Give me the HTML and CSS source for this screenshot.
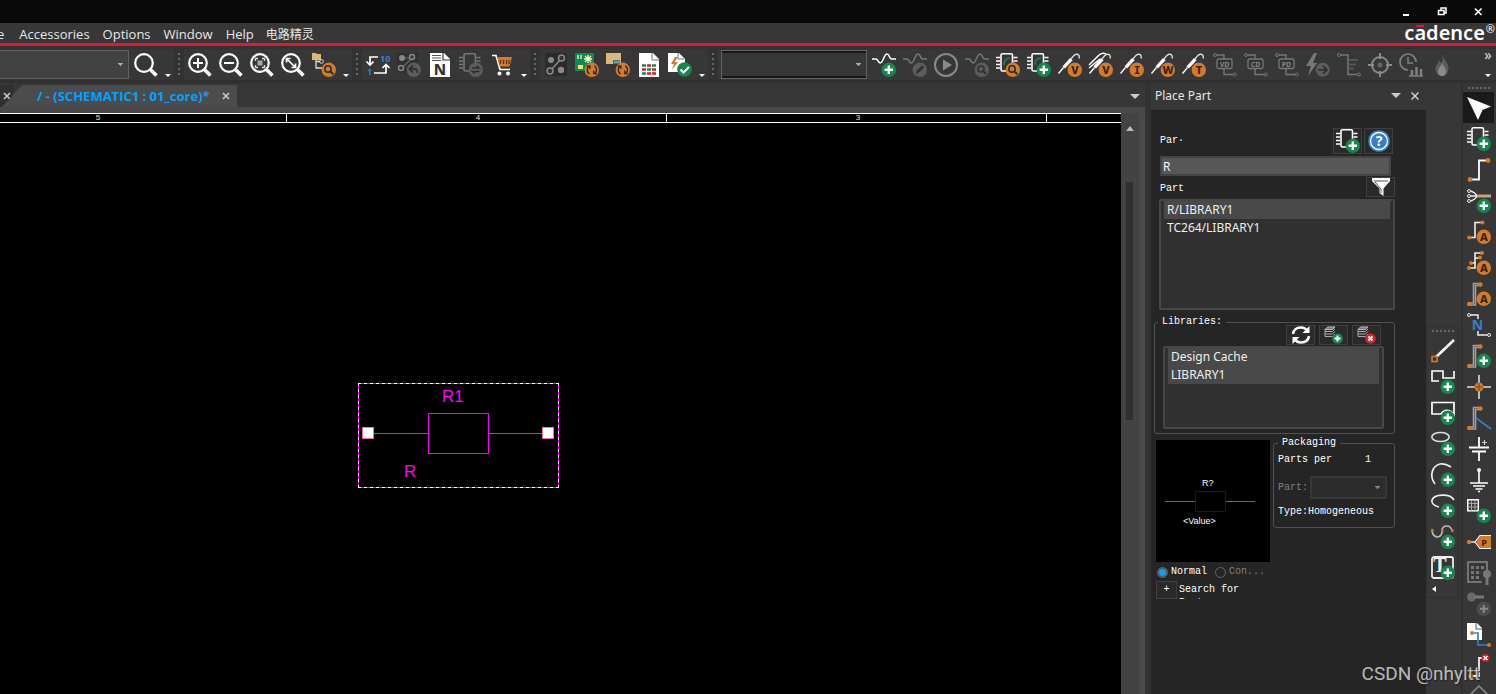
FILE: index.html
```html
<!DOCTYPE html>
<html lang="en">
<head>
<meta charset="utf-8">
<title>Schematic editor</title>
<link rel="stylesheet" href="styles.css">
</head>
<body>
<svg class="sprite" aria-hidden="true">
  <symbol id="b-plus" viewBox="0 0 24 24"><circle cx="16.8" cy="16.8" r="7.2" fill="#14884f"/><path d="M16.8 12.6v8.4M12.6 16.8h8.4" stroke="#fff" stroke-width="2.4"/></symbol>
  <symbol id="b-orange" viewBox="0 0 24 24"><circle cx="16.8" cy="16.8" r="7.2" fill="#d67a27"/></symbol>
  <symbol id="b-gray" viewBox="0 0 24 24"><circle cx="16.8" cy="16.8" r="7.2" fill="#5c5c5c"/></symbol>
  <symbol id="b-find" viewBox="0 0 24 24"><circle cx="16.8" cy="16.8" r="7.2" fill="#d67a27"/><circle cx="16" cy="16" r="3.2" fill="none" stroke="#2b2b2b" stroke-width="1.5"/><path d="M18.4 18.4l3 3" stroke="#2b2b2b" stroke-width="2"/></symbol>
  <symbol id="b-sync" viewBox="0 0 24 24"><circle cx="16.8" cy="16.8" r="7.2" fill="#d67a27"/><path d="M14.500 20.800a4.600 4.600 0 0 1-.5-7.600M19.300 12.900a4.600 4.600 0 0 1 .5 7.600M11.800 13h3v3M21.800 20.600h-3v-3" fill="none" stroke="#2b2b2b" stroke-width="1.4"/></symbol>
  <symbol id="lens" viewBox="0 0 24 24"><circle cx="10" cy="10" r="8.8" fill="none" stroke="#fff" stroke-width="2.2"/><path d="M16.4 16.4l6 6" stroke="#fff" stroke-width="3.6"/></symbol>
  <symbol id="chip" viewBox="0 0 24 24"><path d="M14 18H6.500q-1.500 0-1.500-1.500V2Q5 .8 6.500 .8H15q1.500 0 1.500 1.500V10" fill="none" stroke="currentColor" stroke-width="1.6"/><path d="M0 4.500h4M0 8h4M0 11.500h4M0 15h4M17.500 4.500h4M17.500 8h4" stroke="currentColor" stroke-width="1.6"/></symbol>
  <symbol id="wave" viewBox="0 0 24 24"><path d="M0 6h4c2 0 2 4 4.500 4S12 1 15 1s2 5 4.500 5H24" fill="none" stroke="currentColor" stroke-width="1.5"/></symbol>
  <symbol id="probe" viewBox="0 0 24 24"><path d="M.5 20.500l5-6" stroke="#fff" stroke-width="1.300"/><path d="M4.500 13.500L12 5l2.600 2.200-7.600 8.300z" fill="#fff"/><path d="M13 6c2-3 3.500-5 6-4.800 2 .2 2.500 2 2.200 4.300" fill="none" stroke="#ddd" stroke-width="1.400"/><circle cx="16.800" cy="16.800" r="7.200" fill="#d67a27"/></symbol>
  <symbol id="tag" viewBox="0 0 24 24"><circle cx="2" cy="2" r="1.500" fill="none" stroke="#777" /><path d="M3.500 2H11v4M11 16v5.500h9" fill="none" stroke="#777" stroke-width="1.400"/><rect x="4" y="6" width="15" height="9.500" rx="1.500" fill="#333" stroke="#777" stroke-width="1.300"/><circle cx="21.800" cy="21.500" r="1.500" fill="none" stroke="#777"/></symbol>
  <symbol id="net" viewBox="0 0 24 24"><path d="M2 17.500h6V2.500h8" fill="none" stroke="#eee" stroke-width="1.600"/><circle cx="2.200" cy="17.500" r="2" fill="#d67a27"/><circle cx="15.500" cy="2.500" r="2" fill="#d67a27"/></symbol>
  <symbol id="bus" viewBox="0 0 24 24"><path d="M2 22h5.500V2.500H14" fill="none" stroke="#a0a0a0" stroke-width="3.600"/><path d="M2 22h5.500V2.500H14" fill="none" stroke="#6c6c6c" stroke-width="1"/><circle cx="2.200" cy="22" r="2.200" fill="#d67a27"/><circle cx="13.500" cy="2.500" r="2.200" fill="#d67a27"/></symbol>
  <symbol id="stack" viewBox="0 0 12 12"><path d="M3.500 1h7.500l-2.500 2.500H1z" fill="#777" stroke="#bbb"/><path d="M1 3.500v2h7.500L11 3M1 5.500v2.500h7.500L11 5.500M1 8v2.500h7.500L11 8" fill="none" stroke="#aaa"/></symbol>
</svg>

<header class="titlebar">
  <button class="win" aria-label="Minimize"><svg viewBox="0 0 12 12"><path d="M3 9h6" stroke="#fff" stroke-width="2"/></svg></button>
  <button class="win" aria-label="Restore"><svg viewBox="0 0 12 12"><path d="M5 4V2h5v5H8M2.500 4.500H8v4H2.500z" fill="none" stroke="#fff" stroke-width="1.500"/></svg></button>
  <button class="win" aria-label="Close"><svg viewBox="0 0 12 12"><path d="M3 2.500l6.500 6.500M9.500 2.500L3 9" stroke="#fff" stroke-width="1.600"/></svg></button>
</header>

<nav class="menubar">
  <button>e</button><button>Accessories</button><button>Options</button><button>Window</button><button>Help</button><button class="cjk">电路精灵</button>
  <div class="brand">c<span class="macron">a</span>dence<span class="reg">®</span></div>
</nav>

<div class="toolbar">
  <select class="combo wide-combo" aria-label="Find"><option></option></select>
  <button class="tool" aria-label="Search"><svg><use href="#lens"/></svg></button>
  <button class="more" aria-label="More search tools"></button>
  <i class="grip"></i>
  <button class="tool" aria-label="Zoom in"><svg><use href="#lens"/><path d="M10 5v10M5 10h10" stroke="#fff" stroke-width="2"/></svg></button>
  <button class="tool" aria-label="Zoom out"><svg><use href="#lens"/><path d="M5 10h10" stroke="#fff" stroke-width="2"/></svg></button>
  <button class="tool" aria-label="Zoom to fit"><svg><use href="#lens"/><path d="M5.500 8V5.500H8M12 5.500h2.500V8M14.500 12v2.500H12M8 14.500H5.500V12" fill="none" stroke="#ddd" stroke-width="1.300"/><rect x="7.500" y="7.500" width="5" height="5" fill="#aaa"/></svg></button>
  <button class="tool" aria-label="Zoom to selection"><svg><use href="#lens"/><path d="M6 6l8 8M5.500 9.500v-4h4M14.500 10.500v4h-4" fill="none" stroke="#fff" stroke-width="1.700"/></svg></button>
  <button class="tool" aria-label="Find in hierarchy"><svg><path d="M0 0h4l1 1h4v6H0z" fill="#deb57a"/><path d="M4 7v8h6M4 8.500h4" fill="none" stroke="#ddd" stroke-width="1.300"/><circle cx="9.500" cy="8.500" r="1.800" fill="none" stroke="#ddd"/><use href="#b-find"/></svg></button>
  <button class="more" aria-label="More zoom tools"></button>
  <i class="grip"></i>
  <button class="tool" aria-label="Annotate"><svg><path d="M12 4H4v8M.5 8.500L4 12l3.500-3.500M8 20h12v-8M16.500 15l3.500-3.500L23.500 15" fill="none" stroke="#fff" stroke-width="1.700"/><text x="14" y="9" class="t-num">10</text><text x="1" y="22" class="t-num">1</text></svg></button>
  <button class="tool" aria-label="Back annotate"><svg><rect x="0" y="0" width="21" height="20" rx="2" fill="#303030"/><path d="M5 5h10M5 15L15 5" stroke="#666" stroke-width="1.200"/><circle cx="5" cy="5" r="3" fill="#888"/><circle cx="15" cy="4" r="2.500" fill="#333" stroke="#888" stroke-width="1.500"/><circle cx="4" cy="15" r="2.500" fill="#333" stroke="#888" stroke-width="1.500"/><use href="#b-gray"/><path d="M16 12.500L12.500 16l3.500 3.500M12.500 16h5q3 0 3 4" fill="none" stroke="#333" stroke-width="1.800"/></svg></button>
  <button class="tool" aria-label="Netlist"><svg><path d="M2 0h14l6 6v18H2z" fill="#fff"/><path d="M15 0v7h7" fill="#fff" stroke="#333" stroke-width="1.200"/><path d="M4 2.500h9M4 5h9M4 7.500h9" stroke="#555" stroke-width="1"/><text x="12" y="22" class="t-doc">N</text></svg></button>
  <button class="tool dim" aria-label="Replace part"><svg><use href="#chip"/><use href="#b-gray"/><path d="M13 15h7l-2.500-2M20.500 18.500h-7l2.500 2" fill="none" stroke="#2d2d2d" stroke-width="1.500"/></svg></button>
  <button class="tool" aria-label="Bill of materials"><svg><path d="M2 2.500h4l4 14h10" fill="none" stroke="#fff" stroke-width="1.700"/><path d="M7 4h15l-2.500 9.500H9.500z" fill="#d67a27"/><path d="M10.500 7v4M13.500 7v4M16.500 7v4M19 7v4" stroke="#52351b" stroke-width="1.300"/><circle cx="9.500" cy="20.500" r="2" fill="#fff"/><circle cx="18" cy="20.500" r="2" fill="#fff"/></svg></button>
  <button class="more" aria-label="More report tools"></button>
  <i class="grip"></i>
  <button class="tool" aria-label="Board links"><svg><rect x="1" y="0" width="22" height="23" rx="2" fill="#2b2b2b"/><path d="M6 18L18 5" stroke="#888" stroke-width="1.500"/><circle cx="7" cy="7" r="3" fill="#888"/><circle cx="17" cy="17" r="3.200" fill="#888"/><circle cx="17.500" cy="5" r="3" fill="#333" stroke="#888" stroke-width="1.600"/><circle cx="6" cy="18" r="3" fill="#333" stroke="#888" stroke-width="1.600"/></svg></button>
  <button class="tool" aria-label="Update board"><svg><path d="M0 0h19v18H0z" fill="#0d8b57"/><path d="M3 2v4M6 2v4M9 6h8M13 2v8M10 3l6 6M16 3l-6 6" stroke="#fff6ba" stroke-width="1.300"/><path d="M3 12h5v4H3z" fill="#f8e06b"/><use href="#b-sync"/></svg></button>
  <button class="tool" aria-label="Update layout"><svg><path d="M0 0h15v11H0z" fill="#deb57a"/><path d="M7 7h7v4H7z" fill="#237d9c"/><path d="M8 9h6" stroke="#8cc" /><use href="#b-sync"/></svg></button>
  <button class="tool" aria-label="Reports"><svg><path d="M2 0h14l6 6v18H2z" fill="#fff"/><path d="M15 0v7h7" fill="none" stroke="#777"/><path d="M5 12.500h4M15 12.500h4M10 16.500h4M5 20.500h4" stroke="#14884f" stroke-width="2.500"/><path d="M10 12.500h4M5 16.500h4M15 16.500h4M10 20.500h4M15 20.500h4" stroke="#cc2027" stroke-width="2.500"/></svg></button>
  <button class="tool" aria-label="Design rules check"><svg><path d="M0 0h11l6 6v13H0z" fill="#fff"/><path d="M10 0v6h6" fill="none" stroke="#777"/><path d="M7 4L3 11h3l-2 6 6-8H6.500L10 4z" fill="#d67a27"/><circle cx="16.500" cy="16.500" r="7.300" fill="#14884f"/><path d="M12.500 16.500l3 3 5.500-5.500" fill="none" stroke="#fff" stroke-width="2"/></svg></button>
  <button class="more" aria-label="More checks"></button>
  <i class="grip"></i>
  <select class="combo profile-combo" aria-label="Simulation profile"><option></option></select>
  <button class="tool" aria-label="New simulation"><svg><use href="#wave"/><use href="#b-plus"/></svg></button>
  <button class="tool dim" aria-label="Edit simulation"><svg><use href="#wave"/><use href="#b-gray"/><path d="M13 20.500l1-3 5-5 2 2-5 5z" fill="#2f2f2f"/></svg></button>
  <button class="tool dim" aria-label="Run"><svg><circle cx="12" cy="12" r="11" fill="none" stroke="#8a8a8a" stroke-width="2"/><path d="M9 6.500l9 5.500-9 5.500z" fill="#8a8a8a"/></svg></button>
  <button class="tool dim" aria-label="View results"><svg><use href="#wave"/><use href="#b-gray"/><circle cx="16" cy="16" r="3" fill="none" stroke="#2f2f2f" stroke-width="1.500"/><path d="M18 18l3 3" stroke="#2f2f2f" stroke-width="2"/></svg></button>
  <button class="tool" aria-label="Find simulation part"><svg><use href="#chip"/><path d="M8 12q0-7 6-7" fill="none" stroke="#14884f" stroke-width="1.500"/><use href="#b-find"/></svg></button>
  <button class="tool" aria-label="Add simulation part"><svg><use href="#chip"/><path d="M8 12q0-7 6-7" fill="none" stroke="#14884f" stroke-width="1.500"/><use href="#b-plus"/></svg></button>
  <button class="tool" aria-label="Voltage probe"><svg><use href="#probe"/><text x="17" y="21" class="t-badge">V</text></svg></button>
  <button class="tool" aria-label="Differential voltage probe"><svg><path d="M0 12l9-9q4-4 8-2M0 15l11-9" fill="none" stroke="#fff" stroke-width="1.500"/><use href="#probe"/><text x="17" y="21" class="t-badge">V</text></svg></button>
  <button class="tool" aria-label="Current probe"><svg><use href="#probe"/><text x="17" y="21" class="t-badge t-slab">I</text></svg></button>
  <button class="tool" aria-label="Power probe"><svg><use href="#probe"/><text x="17" y="21" class="t-badge">W</text></svg></button>
  <button class="tool" aria-label="Temperature probe"><svg><use href="#probe"/><text x="17" y="21" class="t-badge">T</text></svg></button>
  <button class="tool" aria-label="Voltage display"><svg><use href="#tag"/><text x="11.500" y="13.500" class="t-tag">VD</text></svg></button>
  <button class="tool" aria-label="Current display"><svg><use href="#tag"/><text x="11.500" y="13.500" class="t-tag">CD</text></svg></button>
  <button class="tool" aria-label="Power display"><svg><use href="#tag"/><text x="11.500" y="13.500" class="t-tag">PD</text></svg></button>
  <button class="tool" aria-label="Bias run"><svg><path d="M8 0L0 13h5L2 23 11 10H7l4-10z" fill="#777"/><circle cx="16.800" cy="16.800" r="7" fill="#5c5c5c"/><path d="M12 16.800h8M17 13l4 3.800-4 3.800" fill="none" stroke="#303030" stroke-width="1.800"/></svg></button>
  <button class="tool" aria-label="Net list display"><svg><circle cx="2" cy="2" r="1.500" fill="none" stroke="#777"/><path d="M3.500 2H11v19.500h9" fill="none" stroke="#777" stroke-width="1.500"/><path d="M12 7h9M12 11.500h7M12 15.500h5" fill="none" stroke="#555" stroke-width="2"/><circle cx="22" cy="21.500" r="1.500" fill="none" stroke="#777"/></svg></button>
  <button class="tool" aria-label="Locate"><svg><circle cx="12" cy="12" r="8" fill="none" stroke="#8a8a8a" stroke-width="2"/><circle cx="12" cy="12" r="2.500" fill="#666"/><path d="M12 0v6M12 18v6M0 12h6M18 12h6" stroke="#8a8a8a" stroke-width="2"/></svg></button>
  <button class="tool" aria-label="Time statistics"><svg><path d="M9 17A8 8 0 1 1 17 9" fill="none" stroke="#808080" stroke-width="1.700"/><path d="M9 4v6h5" fill="none" stroke="#808080" stroke-width="1.500"/><path d="M10 23h14" stroke="#808080" stroke-width="1.500"/><path d="M13 23v-6M17.500 23v-9M22 23v-7" stroke="#808080" stroke-width="2.500"/></svg></button>
  <button class="tool" aria-label="Thermal analysis"><svg><path d="M12 1c1 5 7 9 6.500 15-.5 5-3.500 7-6.500 7s-6.500-2-6.500-7c0-4 3-5 3-9 2 1 2.500 3 2.500 4 2-3 2-6 1-10z" fill="#5c5c5c"/><path d="M12 10c1 3 4 5 4 8.500 0 3-2 4.500-4 4.500s-4-1.500-4-4.500c0-3 3-5 4-8.500z" fill="#8a8a8a"/></svg></button>
  <div class="overflow"><span>»</span><button class="more" aria-label="More simulation tools"></button></div>
</div>

<div class="workspace">
  <main class="editor">
    <div class="tabs">
      <button class="old-tab" aria-label="Close previous tab"><svg viewBox="0 0 8 8"><path d="M1 1l6 6M7 1L1 7" stroke="#ccc" stroke-width="1.500"/></svg></button>
      <div class="tab"><span>/ - (SCHEMATIC1 : 01_core)*</span><button aria-label="Close tab"><svg viewBox="0 0 8 8"><path d="M1 1l6 6M7 1L1 7" stroke="#ccc" stroke-width="1.500"/></svg></button></div>
      <button class="tab-menu down" aria-label="Open tabs"></button>
    </div>
    <div class="page">
      <div class="sheet">
        <div class="ruler"><span>5</span><span>4</span><span>3</span><span></span></div>
        <div class="canvas">
          <svg class="resistor" viewBox="0 0 202 106">
            <path d="M0 .5h201M0 104.500h201M.5 0v105M200.500 0v105" fill="none" stroke="#f0f"/>
            <path d="M0 .5h201M0 104.500h201M.5 0v105M200.500 0v105" fill="none" stroke="#fff" stroke-dasharray="3 3"/>
            <path d="M10 50.500h60M131 50.500h60" stroke="#1080f0"/>
            <rect x="70.500" y="30.500" width="60" height="40" fill="none" stroke="#f0f"/>
            <path d="M4.500 44.500h11v11h-11zM184.500 44.500h11v11h-11z" fill="#fff" stroke="#ff69b4"/>
            <text x="84" y="19">R1</text><text x="46" y="94">R</text>
          </svg>
        </div>
      </div>
      <div class="scroll"><i class="up"></i><i class="thumb"></i></div>
    </div>
  </main>

  <aside class="panel">
    <div class="panel-head"><h2>Place Part</h2><button class="down" aria-label="Panel menu"></button><button aria-label="Close panel"><svg viewBox="0 0 8 8"><path d="M.5 .5l7 7M7.500 .5l-7 7" stroke="#ccc" stroke-width="1.500"/></svg></button></div>
    <div class="panel-body">
      <div class="row name-row"><label for="part-name">Par·</label>
        <button class="small tall" aria-label="Place part"><svg><use href="#chip"/><use href="#b-plus"/></svg></button>
        <button class="small tall" aria-label="Help"><svg><circle cx="12" cy="12" r="10.800" fill="#377fc7"/><circle cx="12" cy="12" r="8.500" fill="none" stroke="#fff" stroke-width="1.300"/><text x="12" y="17" class="t-help">?</text></svg></button>
      </div>
      <input id="part-name" class="part-name" value="R">
      <div class="row list-row"><label for="part-list">Part</label>
        <button class="small" aria-label="Filter"><svg class="mini" viewBox="0 0 20 18"><path d="M1 0h18v3l-6.500 7.500V18L8.500 15v-4.500L1 3z" fill="#fff"/><path d="M3 3h14M4 4l6 7v4" fill="none" stroke="#555"/></svg></button>
      </div>
      <select id="part-list" class="list parts" size="6"><option class="on">R/LIBRARY1</option><option>TC264/LIBRARY1</option></select>

      <fieldset class="libraries"><legend>Libraries:</legend>
        <div class="row">
          <button class="small" aria-label="Refresh"><svg class="mini" viewBox="0 0 20 18"><path d="M2 8q1-6.500 8-6.500 4 0 6 3M18 10q-1 6.500-8 6.500-4 0-6-3" fill="none" stroke="#fff" stroke-width="2.500"/><path d="M18.500 0v7h-7zM1.500 18v-7h7z" fill="#fff"/></svg></button>
          <button class="small" aria-label="Add library"><svg class="mini" viewBox="0 0 20 18"><use href="#stack" width="12" height="12"/><circle cx="13.500" cy="12.500" r="5.300" fill="#14884f"/><path d="M13.500 9.500v6M10.500 12.500h6" stroke="#fff" stroke-width="2"/></svg></button>
          <button class="small" aria-label="Remove library"><svg class="mini" viewBox="0 0 20 18"><use href="#stack" width="12" height="12"/><circle cx="13.500" cy="12.500" r="5.300" fill="#d3222a"/><path d="M11.500 10.500l4 4M15.500 10.500l-4 4" stroke="#fff" stroke-width="2"/></svg></button>
        </div>
        <select class="list" size="4" multiple aria-label="Libraries"><option class="on">Design Cache</option><option class="on">LIBRARY1</option></select>
      </fieldset>

      <div class="detail">
        <svg class="preview" viewBox="0 0 114 122"><path d="M9 61.500h30M69 61.500h30" stroke="#1080f0"/><rect x="39.500" y="51.500" width="30" height="20" fill="none" stroke="#0000e8"/><text x="46" y="46">R?</text><text x="27" y="84">&lt;Value&gt;</text></svg>
        <fieldset class="packaging"><legend>Packaging</legend>
          <div class="per"><span>Parts per</span><span>1</span></div>
          <div class="sub"><label for="sub-part">Part:</label><select id="sub-part" class="combo" disabled><option></option></select></div>
          <div>Type:Homogeneous</div>
        </fieldset>
      </div>
      <div class="radios"><label><input type="radio" name="view" checked>Normal</label><label class="off"><input type="radio" name="view" disabled>Con...</label></div>
      <div class="search"><button aria-label="Expand search">+</button><span>Search for Part</span></div>
    </div>
  </aside>

  <div class="dock draw-dock">
    <div class="dock-group">
      <i class="grip flat"></i>
      <button class="tool" aria-label="Line"><svg><path d="M4 19L23 1" stroke="#fff" stroke-width="2.500"/><rect x="1" y="17.500" width="5" height="5" fill="#333" stroke="#d67a27" stroke-width="1.600"/></svg></button>
      <button class="tool" aria-label="Polyline"><svg><path d="M8 11H1V1h11v7h11V1" fill="none" stroke="#fff" stroke-width="1.600"/><use href="#b-plus"/></svg></button>
      <button class="tool" aria-label="Rectangle"><svg><path d="M1 1.500h22v12q-4-5-9-4-2 .5-4 3.500H1z" fill="none" stroke="#fff" stroke-width="1.700"/><use href="#b-plus"/></svg></button>
      <button class="tool" aria-label="Ellipse"><svg><ellipse cx="9.500" cy="5" rx="8.700" ry="4.500" fill="none" stroke="#ddd" stroke-width="1.600"/><use href="#b-plus"/></svg></button>
      <button class="tool" aria-label="Arc"><svg><path d="M4 21C-2 13 1 3 9 1q5-1 11 3" fill="none" stroke="#eee" stroke-width="1.700"/><use href="#b-plus"/></svg></button>
      <button class="tool" aria-label="Elliptical arc"><svg><path d="M8 13C3 12 0 9 1 6c2-6 18-7 22 0" fill="none" stroke="#eee" stroke-width="1.700"/><use href="#b-plus"/></svg></button>
      <button class="tool" aria-label="Bezier"><svg><path d="M1 6q1 6 6 6 4-1 4-6 0-5 5-5 4 0 5 5" fill="none" stroke="#bbb" stroke-width="1.600"/><path d="M0 4h2.500v3H0zM10 4h2.500v3H10zM20 4h2.500v3H20z" fill="#d67a27"/><use href="#b-plus"/></svg></button>
      <button class="tool" aria-label="Text"><svg><rect x="1" y="1" width="21" height="21" rx="2" fill="none" stroke="#eee" stroke-width="1.800"/><text x="9" y="16" class="t-serif">T</text><use href="#b-plus"/></svg></button>
      <i class="left-arrow"></i>
    </div>
  </div>

  <div class="dock">
    <i class="grip flat"></i>
    <button class="tool pressed" aria-label="Select"><svg><path d="M0 1l24 9.500-8.500 3.500-4.500 10z" fill="#fff"/></svg></button>
    <button class="tool" aria-label="Place part"><svg><use href="#chip"/><use href="#b-plus"/></svg></button>
    <button class="tool" aria-label="Place wire"><svg><path d="M3 21.500h9V2.500h9" fill="none" stroke="#fff" stroke-width="1.800"/><circle cx="3" cy="21.500" r="2.400" fill="#d67a27"/><circle cx="21" cy="2.500" r="2.400" fill="#d67a27"/></svg></button>
    <button class="tool" aria-label="Place net group"><svg><path d="M3 2q5 1 7 5-2 4-7 5M3 7h8" fill="none" stroke="#eee" stroke-width="1.400"/><circle cx="2" cy="2" r="1.500" fill="#333" stroke="#eee"/><circle cx="2" cy="7" r="1.500" fill="#333" stroke="#eee"/><circle cx="2" cy="12" r="1.500" fill="#333" stroke="#eee"/><path d="M10 7h14" stroke="#c6a477" stroke-width="3"/><use href="#b-plus"/></svg></button>
    <button class="tool" aria-label="Auto wire"><svg><use href="#net"/><use href="#b-orange"/><text x="16.800" y="21" class="t-badge">A</text></svg></button>
    <button class="tool" aria-label="Auto wire multiple"><svg><path d="M2 17h6V2h7M4 12h4M8 7h5" fill="none" stroke="#eee" stroke-width="1.600"/><circle cx="15" cy="2" r="2" fill="#d67a27"/><circle cx="13" cy="6.500" r="2" fill="#d67a27"/><circle cx="4" cy="12" r="2" fill="#d67a27"/><circle cx="2" cy="17" r="2" fill="#d67a27"/><use href="#b-orange"/><text x="16.800" y="21" class="t-badge">A</text></svg></button>
    <button class="tool" aria-label="Auto bus"><svg><use href="#bus"/><use href="#b-orange"/><text x="16.800" y="21" class="t-badge">A</text></svg></button>
    <button class="tool" aria-label="Net alias"><svg><path d="M3.500 2H11v4M11 18v4h9" fill="none" stroke="#eee" stroke-width="1.500"/><circle cx="2" cy="2" r="1.500" fill="none" stroke="#eee"/><circle cx="22" cy="22" r="1.500" fill="none" stroke="#eee"/><text x="10.500" y="16.500" class="t-net">N</text></svg></button>
    <button class="tool" aria-label="Place bus"><svg><use href="#bus"/><use href="#b-plus"/></svg></button>
    <button class="tool" aria-label="Junction"><svg><path d="M12 0v24M0 12h24" stroke="#ddd" stroke-width="1.600"/><circle cx="12" cy="12" r="4.500" fill="#d67a27"/><path d="M12 8v8M8 12h8" stroke="#76431a"/></svg></button>
    <button class="tool" aria-label="Bus entry"><svg><use href="#bus"/><path d="M9 12l15 11" stroke="#377fc7" stroke-width="1.600"/></svg></button>
    <button class="tool" aria-label="Place power"><svg><path d="M12 0v10M2 10.500h20M5 14.500h14M12 15v9" stroke="#fff" stroke-width="1.800"/><path d="M15 5.500h5M17.500 3v5" stroke="#ccc" stroke-width="1.200"/></svg></button>
    <button class="tool" aria-label="Place ground"><svg><circle cx="12" cy="2" r="2" fill="#fff"/><path d="M12 2v13M3 15h18M6 18h12M8.500 21h7M11 23.500h2" stroke="#fff" stroke-width="1.600"/></svg></button>
    <button class="tool" aria-label="Hierarchical block"><svg><rect x=".8" y=".8" width="10.500" height="11" fill="none" stroke="#fff" stroke-width="1.500"/><path d="M1 4.500h10M1 8h10M4.500 1v11M8 1v11" stroke="#aaa"/><use href="#b-plus"/></svg></button>
    <button class="tool" aria-label="Hierarchical port"><svg><path d="M2 12h6" stroke="#ddd" stroke-width="1.500"/><circle cx="2" cy="12" r="2.200" fill="#d67a27"/><path d="M9 12l4.500-6H24v12H13.500z" fill="#d67a27"/><path d="M24 5.500H13L8 12l5 6.500h11" fill="none" stroke="#fff" stroke-width="1.200"/><text x="17" y="16" class="t-port">P</text></svg></button>
    <button class="tool" aria-label="Hierarchical pin"><svg><path d="M15 21H1V1h19v8" fill="none" stroke="#888" stroke-width="1.500"/><path d="M4 5h3v3H4zM9 5h3v3H9zM14 5h3v3h-3zM4 10h3v3H4zM9 10h3v3H9zM4 15h3v3H4zM9 15h3v3H9z" fill="#777"/><circle cx="20" cy="13" r="4" fill="#777"/><path d="M20 15v9" stroke="#777" stroke-width="3"/></svg></button>
    <button class="tool" aria-label="Off-page pin"><svg><circle cx="4.500" cy="5" r="4.500" fill="#6a6a6a"/><path d="M7 5h10" stroke="#777" stroke-width="3"/><circle cx="16.800" cy="16.800" r="7.200" fill="#4c4c4c"/><path d="M16.800 13v8M13 16.800h8" stroke="#888" stroke-width="2"/></svg></button>
    <button class="tool" aria-label="Off-page connector"><svg><path d="M0 0h10l5 5v12H0z" fill="#fff"/><path d="M9 0v6h6" fill="none" stroke="#555"/><path d="M5 10h6v12h11" fill="none" stroke="#377fc7" stroke-width="1.700"/><circle cx="5" cy="10" r="2" fill="#d67a27"/><circle cx="22" cy="22" r="2" fill="#d67a27"/></svg></button>
    <button class="tool" aria-label="No connect"><svg><path d="M4 22h8V4h5" fill="none" stroke="#eee" stroke-width="1.800"/><circle cx="4" cy="22" r="2.500" fill="#d67a27"/><circle cx="18.500" cy="4" r="4" fill="#cc2027"/><path d="M16.500 2l4 4M20.500 2l-4 4" stroke="#fff" stroke-width="1.400"/></svg></button>
    <button class="tool" aria-label="Graphics"><svg><path d="M12 1l9 9-9 9-9-9z" fill="none" stroke="#888" stroke-width="1.600"/></svg></button>
  </div>
</div>
<div class="watermark">CSDN @nhyltt</div>
</body>
</html>
```

FILE: styles.css
```css
* { box-sizing: border-box; }
body {
  margin: 0;
  height: 100vh;
  display: flex;
  flex-direction: column;
  overflow: hidden;
  background: #373737;
  color: #e6e6e6;
  font: 13px/18px "Open Sans", "Noto Sans CJK SC", sans-serif;
}
button, input, select { font: inherit; color: inherit; border: 0; margin: 0; padding: 0; background: none; }
svg { display: block; }
.sprite { position: absolute; width: 0; height: 0; }

.titlebar { flex: none; height: 23px; background: #090909; display: flex; justify-content: flex-end; }
.win { width: 36px; display: grid; place-items: center; }
.win svg { width: 12px; height: 12px; }

.menubar { flex: none; height: 23px; display: flex; align-items: center; border-bottom: 3px solid #e31837; }
.menubar button { padding: 2px 6px 0 7px; line-height: 20px; }
.menubar button:first-child { margin-left: -10px; padding-right: 8px; }
.menubar .cjk { font: 12px/20px "Noto Sans CJK SC", sans-serif; padding-left: 6px; }
.brand { margin-left: auto; display: flex; color: #fff; font: 600 20px/20px "Noto Sans", sans-serif; }
.macron { position: relative; }
.macron::before { content: ""; position: absolute; left: 2px; top: 2px; width: 8px; height: 2px; background: #e31837; }
.reg { font: 11px/12px "Noto Sans", sans-serif; padding: 0 1px; }

.toolbar { flex: none; height: 37px; display: flex; align-items: center; background: #373737; border-top: 3px solid #323232; border-bottom: 3px solid #303030; }
.tool { flex: none; width: 31px; height: 31px; display: grid; place-items: center; color: #fff; }
.tool svg { width: 24px; height: 24px; overflow: visible; }
.dim { color: #777; }
.more { flex: none; width: 13px; height: 31px; display: grid; place-items: end center; padding-bottom: 3px; }
.more::before { content: ""; border: 3px solid transparent; border-top-color: #fff; border-bottom: 0; }
.grip { flex: none; width: 10px; height: 31px; display: flex; justify-content: center; padding: 4px 0; background: #323232; }
.grip::before { content: ""; width: 2px; height: 22px; background: repeating-linear-gradient(#666 0 2px, transparent 2px 5px); }
.combo { appearance: none; border: 1px solid #626262; background: conic-gradient(from -45deg at 50% 100%, #aaa 90deg, #424242 0) no-repeat right 5px center / 5px 3px #424242; height: 29px; }
.wide-combo { flex: none; width: 129px; border-left: 0; margin-right: 1px; }
.profile-combo { flex: none; width: 146px; margin: 0 1px 0 3px; background-color: #373737; box-shadow: inset 0 2px #171717, inset 0 -2px #171717; }
.overflow { margin-left: auto; width: 16px; text-align: center; height: 31px; display: flex; flex-direction: column; justify-content: space-between; align-items: center; font-size: 15px; line-height: 10px; }
.overflow .more { height: 12px; }

.workspace { flex: 1; min-height: 0; display: flex; }
.editor { flex: 1; min-width: 0; display: flex; flex-direction: column; border-right: 6px solid #323232; }
.tabs { flex: none; height: 24px; display: flex; align-items: end; padding-top: 2px; }
.old-tab { width: 14px; height: 22px; background: #303030; display: grid; place-items: center; }
.old-tab svg, .tab svg { width: 8px; height: 8px; }
.tab { height: 22px; width: 235px; margin-left: -12px; display: flex; align-items: center; justify-content: space-between; padding: 0 7px 0 35px; background: #4c4c4c; clip-path: polygon(20px 0, 100% 0, 100% 100%, 0 100%); color: #00a3ff; font-weight: 700; font-size: 13px; white-space: nowrap; }
.down::before { content: ""; display: block; border: 5px solid transparent; border-top-color: #ccc; border-bottom: 0; }
.tab-menu { margin-left: auto; padding: 0 5px 8px; }
.page { flex: 1; min-height: 0; display: flex; border-top: 6px solid #484848; border-right: 6px solid #4a4a4a; }
.sheet { flex: 1; min-width: 0; display: flex; flex-direction: column; background: #000; }
.ruler { flex: none; height: 10px; display: flex; border: 1px solid #fff; border-width: 1px 0; overflow: hidden; font: 8px/8px "Liberation Sans", sans-serif; }
.ruler span { flex: none; width: 380px; border-right: 1px solid #fff; text-align: center; padding-left: 3px; }
.ruler span:first-child { width: 287px; padding: 0 90px 0 0; }
.canvas { flex: 1; position: relative; }
.resistor { position: absolute; left: 358px; top: 260px; width: 202px; height: 106px; fill: #f0f; font: 17px "Liberation Sans", sans-serif; }
.scroll { width: 18px; padding: 10px 6px 0 5px; background: #434343; }
.scroll i { display: block; }
.up { border: 4px solid transparent; border-bottom: 5px solid #bbb; border-top: 0; margin: 3px 0 51px; width: 8px; }
.thumb { height: 238px; background: #303030; }

.panel { flex: none; width: 275px; display: flex; flex-direction: column; background: #252525; }
.panel-head { height: 27px; flex: none; display: flex; align-items: center; gap: 10px; padding: 0 7px 2px 4px; background: #373737; }
.panel-head h2 { margin: 0 auto 0 0; font: 12px/18px "Noto Sans", sans-serif; }
.panel-head svg { width: 8px; height: 8px; }
.panel-body { padding: 18px 31px 0 3px; font: 10px/14px "Liberation Mono", monospace; color: #fff; }
.row { display: flex; align-items: center; gap: 2px; }
.row label { margin-right: auto; padding-left: 6px; }
.name-row { padding-right: 2px; }
.list-row label { padding-top: 4px; }
.small { width: 29px; height: 20px; border: 1px solid #3f3f3f; background: #2a2a2a; display: grid; place-items: center; }
.tall { height: 26px; }
.small svg { width: 24px; height: 24px; }
.small .mini { width: 20px; height: 18px; }
.part-name { display: block; width: 231px; height: 20px; margin: 2px 0 1px 6px; padding: 0 1px; border: 2px solid #444; background: #575757; font: 12px/16px "Open Sans", sans-serif; }
.list { appearance: none; display: block; overflow: hidden; border: 2px solid #474747; background: #303030; padding: 0 3px; font: 12px/18px "Noto Sans", sans-serif; color: #eee; }
.list option { min-height: 18px; height: 18px; padding: 0 3px; line-height: 18px; }
.list .on { background: #494949; }
.parts { width: 236px; height: 111px; margin: 2px 0 5px 5px; }
fieldset { margin: 0; padding: 0; min-width: 0; border: 1px solid #505050; border-radius: 3px; }
legend { padding: 0 4px; margin-left: 0; line-height: 14px; }
.libraries { height: 119px; padding: 0 10px 0 8px; margin-bottom: 6px; }
.libraries legend { margin-left: -5px; }
.libraries .row { justify-content: flex-end; gap: 4px; margin: -4px 3px 1px 0; }
.libraries .list { width: 100%; height: 83px; }
.detail { display: flex; align-items: flex-start; gap: 3px; margin-left: 2px; }
.preview { flex: none; width: 114px; height: 122px; background: #000; fill: #fff; font: 9px "Liberation Sans", sans-serif; }
.packaging { width: 122px; height: 92px; margin-top: -4px; padding: 1px 7px 0 4px; }
.packaging > div { white-space: nowrap; }
.per { display: flex; justify-content: space-between; padding: 2px 16px 0 0; }
.sub { display: flex; align-items: center; justify-content: space-between; color: #808080; margin: 9px 0 6px; }
.sub .combo { width: 77px; height: 23px; border: 2px solid #3f3f3f; background-color: #303030; }
.radios { display: flex; gap: 8px; margin: 3px 0 2px 3px; }
.radios label { display: flex; align-items: center; gap: 3px; }
.radios input { appearance: none; width: 11px; height: 11px; border: 1px solid #666; border-radius: 50%; }
.radios input:checked { background: radial-gradient(#00a3ff 3px, #555 4px); }
.off { color: #808080; }
.search { display: flex; align-items: flex-start; gap: 2px; margin-left: 2px; height: 18px; overflow: hidden; }
.search button { width: 21px; height: 18px; border: 1px solid #3f3f3f; background: #2a2a2a; }
.search span { width: 66px; padding-top: 2px; line-height: 13px; }

.dock { flex: none; width: 35px; display: flex; flex-direction: column; align-items: flex-start; padding-top: 1px; overflow: hidden; border-left: 2px solid #303030; }
.draw-dock { padding-top: 243px; border: 0; }
.dock-group { width: 33px; border: 1px solid #303030; display: flex; flex-direction: column; align-items: center; }
.grip.flat { width: 31px; height: 8px; align-items: center; padding: 0; background: none; }
.grip.flat::before { width: 22px; height: 2px; background: repeating-linear-gradient(90deg, #666 0 2px, transparent 2px 4px); }
.pressed { background: #1a1a1a; }
.left-arrow { align-self: flex-start; margin: 3px 0 5px 5px; border: 3px solid transparent; border-right: 4px solid #fff; border-left: 0; }
.watermark { position: absolute; right: 16px; bottom: 9px; color: rgba(225, 225, 225, .8); font: 19px/22px Roboto, sans-serif; text-shadow: 1px 1px 1px #222; pointer-events: none; }

text { text-anchor: start; }
.t-num { font: 700 9px "Noto Sans", sans-serif; fill: #377fc7; }
.t-doc, .t-badge, .t-tag, .t-help, .t-serif, .t-net, .t-port { text-anchor: middle; }
.t-doc { font: 800 15px "Noto Sans", sans-serif; fill: #333; }
.t-badge { font: 800 11px "Noto Sans", sans-serif; fill: #33251a; }
.t-slab { font-family: "DejaVu Sans Mono", monospace; }
.t-tag { font: 700 7px "Noto Sans", sans-serif; fill: #888; }
.t-help { font: 700 14px "Noto Sans", sans-serif; fill: #fff; }
.t-serif { font: 700 20px "Liberation Serif", serif; fill: #eee; }
.t-net { font: 700 14px "Noto Sans", sans-serif; fill: #377fc7; }
.t-port { font: 700 9px "Noto Sans", sans-serif; fill: #33251a; }
```
